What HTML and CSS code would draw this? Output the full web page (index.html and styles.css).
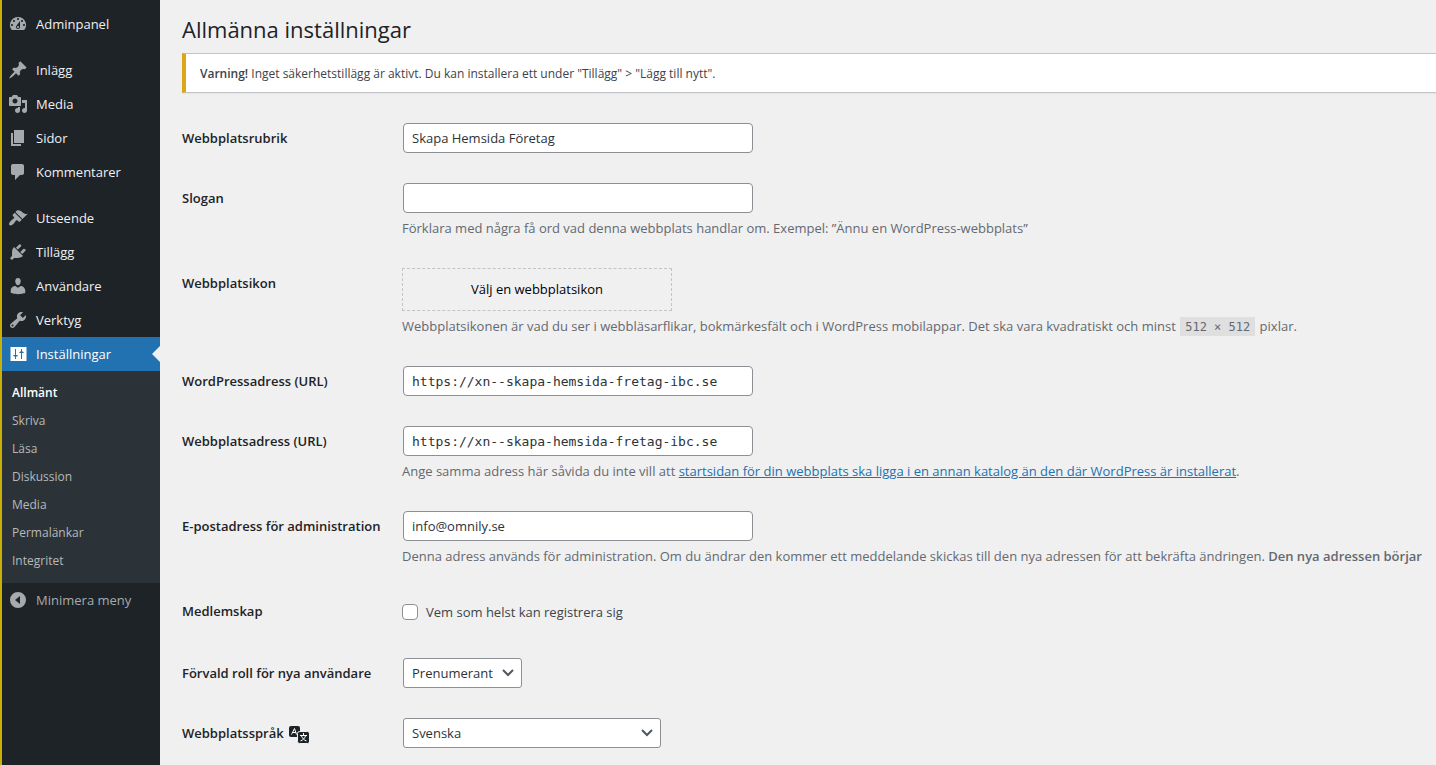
FILE: index.html
```html
<!DOCTYPE html>
<html lang="sv">
<head>
<meta charset="utf-8">
<meta name="viewport" content="width=device-width, initial-scale=1">
<title>Allmänna inställningar</title>
<link rel="stylesheet" href="styles.css">
</head>
<body>
<div class="layout">
  <nav class="sidebar" aria-label="Huvudmeny">
    <ul class="menu">
      <li><a class="menu-link" href="#"><svg class="icon" viewBox="0 0 20 20"><path fill-rule="evenodd" d="M3.76 16h12.48A7.998 7.998 0 0010 3a7.998 7.998 0 00-6.24 13zM10 4c.55 0 1 .45 1 1s-.45 1-1 1-1-.45-1-1 .45-1 1-1zM6 6c.55 0 1 .45 1 1s-.45 1-1 1-1-.45-1-1 .45-1 1-1zm8 0c.55 0 1 .45 1 1s-.45 1-1 1-1-.45-1-1 .45-1 1-1zm-5.37 5.55L12 7v6c0 1.1-.9 2-2 2s-2-.9-2-2c0-.57.24-1.08.63-1.45zM4 10c.55 0 1 .45 1 1s-.45 1-1 1-1-.45-1-1 .45-1 1-1zm12 0c.55 0 1 .45 1 1s-.45 1-1 1-1-.45-1-1 .45-1 1-1zm-5 3c0-.55-.45-1-1-1s-1 .45-1 1 .45 1 1 1 1-.45 1-1z"/></svg>Adminpanel</a></li>
      <li class="group"><a class="menu-link" href="#"><svg class="icon" viewBox="0 0 20 20"><path d="M10.44 3.02l1.82-1.82 6.36 6.35-1.83 1.82c-1.05-.68-2.48-.57-3.41.36l-.75.75c-.92.93-1.04 2.35-.35 3.41l-1.83 1.82-2.41-2.41-2.8 2.79c-.42.42-3.38 2.71-3.8 2.29s1.86-3.39 2.28-3.81l2.79-2.79L4.1 9.36l1.83-1.82c1.05.69 2.48.57 3.4-.36l.75-.75c.93-.92 1.05-2.35.36-3.41z"/></svg>Inlägg</a></li>
      <li><a class="menu-link" href="#"><svg class="icon" viewBox="0 0 20 20"><path fill-rule="evenodd" d="M13 11V4c0-.55-.45-1-1-1h-1.67L9 1H5L3.67 3H2c-.55 0-1 .45-1 1v7c0 .55.45 1 1 1h10c.55 0 1-.45 1-1zM7 4.5c1.38 0 2.5 1.12 2.5 2.5S8.38 9.5 7 9.5 4.5 8.38 4.5 7 5.62 4.5 7 4.5zM14 6h5v10.5c0 1.38-1.12 2.5-2.5 2.5S14 17.88 14 16.5s1.12-2.5 2.5-2.5c.17 0 .34.02.5.05V9h-3V6zm-4 8.05V13h2v3.5c0 1.38-1.12 2.5-2.5 2.5S7 17.88 7 16.5 8.12 14 9.5 14c.17 0 .34.02.5.05z"/></svg>Media</a></li>
      <li><a class="menu-link" href="#"><svg class="icon" viewBox="0 0 20 20"><path d="M6 15V2h10v13H6zm-1 1h8v2H3V5h2v11z"/></svg>Sidor</a></li>
      <li><a class="menu-link" href="#"><svg class="icon" viewBox="0 0 20 20"><path d="M5 2h9c1.1 0 2 .9 2 2v7c0 1.1-.9 2-2 2h-2l-5 5v-5H5c-1.1 0-2-.9-2-2V4c0-1.1.9-2 2-2z"/></svg>Kommentarer</a></li>
      <li class="group"><a class="menu-link" href="#"><svg class="icon" viewBox="0 0 20 20"><path d="M14.48 11.06L7.41 3.99l1.5-1.5c.5-.56 2.3-.47 3.51.32 1.21.8 1.43 1.28 2.91 2.1 1.18.64 2.45 1.26 4.45.85zm-.71.71L6.7 4.7 4.93 6.47c-.39.39-.39 1.02 0 1.41l1.06 1.06c.39.39.39 1.03 0 1.42-.6.6-1.43 1.11-2.21 1.69-.35.26-.7.53-1.01.84C1.43 14.23.4 16.08 1.4 17.07c.99 1 2.84-.03 4.18-1.36.31-.31.58-.66.85-1.02.57-.78 1.08-1.61 1.69-2.21.39-.39 1.02-.39 1.41 0l1.06 1.06c.39.39 1.02.39 1.41 0z"/></svg>Utseende</a></li>
      <li><a class="menu-link" href="#"><svg class="icon" viewBox="0 0 20 20"><path d="M13.11 4.36L9.87 7.6 8 5.73l3.24-3.24c.35-.34 1.05-.2 1.56.32.52.51.66 1.21.31 1.55zm-8 1.77l.91-1.12 9.01 9.01-1.19.84c-.71.71-2.63 1.16-3.82 1.16H6.14L4.9 17.26c-.59.59-1.54.59-2.12 0-.59-.58-.59-1.53 0-2.12l1.24-1.24v-3.88c0-1.13.4-3.19 1.09-3.89zm7.26 3.97l3.24-3.24c.34-.35 1.04-.21 1.55.31.52.51.66 1.21.31 1.55l-3.24 3.25z"/></svg>Tillägg</a></li>
      <li><a class="menu-link" href="#"><svg class="icon" viewBox="0 0 20 20"><path d="M10 9.25c-2.27 0-2.73-3.44-2.73-3.44C7 4.02 7.82 2 9.97 2c2.16 0 2.98 2.02 2.71 3.81 0 0-.41 3.44-2.68 3.44zm0 2.57L12.72 10c2.39 0 4.52 2.33 4.52 4.53v2.49s-3.65 1.13-7.24 1.13c-3.65 0-7.24-1.13-7.24-1.13v-2.49c0-2.25 1.94-4.48 4.47-4.48z"/></svg>Användare</a></li>
      <li><a class="menu-link" href="#"><svg class="icon" viewBox="0 0 20 20"><path fill-rule="evenodd" d="M16.68 9.77c-1.34 1.34-3.3 1.67-4.95.99l-5.41 6.52c-.99.99-2.59.99-3.58 0s-.99-2.59 0-3.57l6.52-5.42c-.68-1.65-.35-3.61.99-4.95 1.28-1.28 3.12-1.62 4.72-1.06l-2.89 2.89 2.82 2.82 2.86-2.87c.53 1.58.18 3.39-1.08 4.65zM3.81 16.21c.4.39 1.04.39 1.43 0 .4-.4.4-1.04 0-1.43-.39-.4-1.03-.4-1.43 0-.39.39-.39 1.03 0 1.43z"/></svg>Verktyg</a></li>
      <li><a class="menu-link current" href="#" aria-current="true"><svg class="icon" viewBox="0 0 20 20"><path fill-rule="evenodd" d="M18.500 17V3h-16v14zM7 11V5h1v6h2l-1 1.500H8V15H7v-2.500H6L5 11zM13 15V9h-2l1-1.500h1V5h1v2.500h1L16 9h-2v6z"/></svg>Inställningar</a>
        <ul class="submenu">
          <li><a class="sub-link active" href="#" aria-current="page">Allmänt</a></li>
          <li><a class="sub-link" href="#">Skriva</a></li>
          <li><a class="sub-link" href="#">Läsa</a></li>
          <li><a class="sub-link" href="#">Diskussion</a></li>
          <li><a class="sub-link" href="#">Media</a></li>
          <li><a class="sub-link" href="#">Permalänkar</a></li>
          <li><a class="sub-link" href="#">Integritet</a></li>
        </ul>
      </li>
    </ul>
    <button class="collapse" type="button"><svg class="icon" viewBox="0 0 20 20"><path fill-rule="evenodd" d="M10 2a8 8 0 110 16 8 8 0 010-16zm2 12V6l-5 4z"/></svg>Minimera meny</button>
  </nav>

  <main class="content">
    <h1 class="title">Allmänna inställningar</h1>
    <div class="notice"><p class="notice-text"><strong>Varning!</strong> Inget säkerhetstillägg är aktivt. Du kan installera ett under "Tillägg" &gt; "Lägg till nytt".</p></div>

    <form class="settings">
      <div class="row">
        <label class="label" for="blogname">Webbplatsrubrik</label>
        <div class="field"><input class="text" id="blogname" type="text" value="Skapa Hemsida Företag"></div>
      </div>
      <div class="row">
        <label class="label" for="tagline">Slogan</label>
        <div class="field"><input class="text" id="tagline" type="text" aria-describedby="tagline-help">
          <p class="help" id="tagline-help">Förklara med några få ord vad denna webbplats handlar om. Exempel: ”Ännu en WordPress-webbplats”</p></div>
      </div>
      <div class="row">
        <label class="label" for="site-icon">Webbplatsikon</label>
        <div class="field"><button class="upload" id="site-icon" type="button">Välj en webbplatsikon</button>
          <p class="help">Webbplatsikonen är vad du ser i webbläsarflikar, bokmärkesfält och i WordPress mobilappar. Det ska vara kvadratiskt och minst <code class="code">512 × 512</code> pixlar.</p></div>
      </div>
      <div class="row">
        <label class="label" for="siteurl">WordPressadress (URL)</label>
        <div class="field"><input class="text mono" id="siteurl" type="url" value="https://xn--skapa-hemsida-fretag-ibc.se"></div>
      </div>
      <div class="row">
        <label class="label" for="home">Webbplatsadress (URL)</label>
        <div class="field"><input class="text mono" id="home" type="url" value="https://xn--skapa-hemsida-fretag-ibc.se">
          <p class="help">Ange samma adress här såvida du inte vill att <a class="link" href="#">startsidan för din webbplats ska ligga i en annan katalog än den där WordPress är installerat</a>.</p></div>
      </div>
      <div class="row">
        <label class="label" for="email">E-postadress för administration</label>
        <div class="field"><input class="text" id="email" type="email" value="info@omnily.se">
          <p class="help">Denna adress används för administration. Om du ändrar den kommer ett meddelande skickas till den nya adressen för att bekräfta ändringen. <strong>Den nya adressen börjar</strong></p></div>
      </div>
      <div class="row">
        <span class="label">Medlemskap</span>
        <div class="field"><label class="choice" for="register"><input class="check" id="register" type="checkbox">Vem som helst kan registrera sig</label></div>
      </div>
      <div class="row">
        <label class="label" for="role">Förvald roll för nya användare</label>
        <div class="field"><div class="select-wrap role"><select class="select" id="role"><option>Prenumerant</option></select><svg class="chevron" viewBox="0 0 16 16"><path d="M3 5l5 5 5-5"/></svg></div></div>
      </div>
      <div class="row">
        <label class="label" for="lang">Webbplatsspråk
          <svg class="translate" viewBox="0 0 20 20" aria-hidden="true"><rect x="0" y="1" width="11" height="11" rx="2"/><path class="stroke" d="M2.500 9.500l3-6 2 6M4 7.500h3"/><rect class="front" x="8.500" y="6.500" width="12" height="12" rx="2"/><path class="stroke" d="M14.500 8v2M11 10.500h7M12.500 11c1 2.500 2.500 4 5 5M16.500 11c-1 2.500-2.500 4-5 5"/></svg></label>
        <div class="field"><div class="select-wrap lang"><select class="select" id="lang"><option>Svenska</option></select><svg class="chevron" viewBox="0 0 16 16"><path d="M3 5l5 5 5-5"/></svg></div></div>
      </div>
    </form>
  </main>
</div>
</body>
</html>
```
FILE: styles.css
```css
* {
  box-sizing: border-box;
}

body {
  margin: 0;
  background: #f0f0f0;
  color: #3c434a;
  font-family: "Open Sans", "Noto Sans", sans-serif;
  font-size: 13px;
  line-height: 20px;
}

ul {
  margin: 0;
  padding: 0;
  list-style: none;
}

.layout {
  display: flex;
  min-height: 100vh;
}

/* Sidebar */
.sidebar {
  flex: 0 0 160px;
  padding-top: 7px;
  border-left: 2px solid #c9b009;
  background: #1d2327;
}

.group {
  margin-top: 12px;
}

.menu-link,
.collapse {
  display: flex;
  align-items: center;
  gap: 8px;
  width: 100%;
  height: 34px;
  padding: 0 6px;
  color: #f0f0f1;
  font: inherit;
  text-decoration: none;
}

.icon {
  flex: none;
  width: 20px;
  height: 20px;
  fill: #a7aaad;
}

.current {
  position: relative;
  background: #2271b1;
  color: #fff;
}

.current .icon {
  fill: #fff;
}

.current::after {
  content: "";
  position: absolute;
  top: 9px;
  right: 0;
  border: 8px solid transparent;
  border-left-width: 0;
  border-right-color: #f0f0f0;
}

.submenu {
  padding: 8px 0;
  background: #2c3338;
}

.sub-link {
  display: block;
  padding: 4px 10px;
  color: #b5b9bd;
  font-size: 12px;
  text-decoration: none;
}

.active {
  color: #fff;
  font-weight: 600;
}

.collapse {
  border: 0;
  background: none;
  color: #a7aaad;
}

/* Content */
.content {
  flex: 1;
  min-width: 0;
  padding: 15px 0 15px 22px;
  overflow: hidden;
}

.title {
  margin: 0 0 10px;
  color: #1d2327;
  font-size: 22px;
  font-weight: 400;
  line-height: 28px;
}

.notice {
  margin-bottom: 15px;
  padding: 10px 14px 8px;
  border: 1px solid #c3c4c7;
  border-left: 4px solid #dba617;
  border-right: 0;
  background: #fff;
  box-shadow: 0 1px 1px rgba(0, 0, 0, 0.04);
}

.notice-text {
  margin: 0;
  font-size: 12px;
}

strong {
  font-weight: 600;
}

.row {
  display: grid;
  grid-template-columns: 220px minmax(0, 1fr);
  white-space: nowrap;
}

.label {
  padding: 20px 0;
  color: #1d2327;
  font-weight: 600;
}

.field {
  padding: 15px 0;
}

.text {
  display: block;
  width: 350px;
  height: 30px;
  margin: 0 1px;
  padding: 0 8px;
  border: 1px solid #8c8f94;
  border-radius: 4px;
  background: #fff;
  color: #2c3338;
  font: inherit;
}

.mono {
  font-family: "DejaVu Sans Mono", monospace;
}

.help {
  margin: 5px 0 0;
  color: #646970;
  line-height: 20px;
}

.upload {
  display: block;
  width: 270px;
  height: 43px;
  padding: 0 0 1px;
  border: 1px dashed #c3c4c7;
  background: none;
  color: #000;
  font: inherit;
}

.code {
  margin: 0 1px;
  padding: 3px 5px 2px;
  background: #dfdfe0;
  font-family: "DejaVu Sans Mono", monospace;
  font-size: 12px;
  line-height: 16px;
}

.link {
  color: #2271b1;
}

.choice {
  display: flex;
  align-items: center;
  gap: 8px;
  height: 32px;
}

.check {
  width: 16px;
  height: 16px;
  margin: 0;
  border: 1px solid #8c8f94;
  border-radius: 4px;
  background: #fff;
  appearance: none;
}

.check:checked {
  background: #2271b1;
}

.select-wrap {
  display: grid;
  align-items: center;
  margin-left: 1px;
}

.role {
  width: 119px;
}

.lang {
  width: 258px;
}

.select {
  grid-area: 1 / 1;
  width: 100%;
  height: 30px;
  padding: 0 24px 0 8px;
  border: 1px solid #8c8f94;
  border-radius: 3px;
  background: #fff;
  color: #2c3338;
  font: inherit;
  appearance: none;
}

.chevron {
  grid-area: 1 / 1;
  justify-self: end;
  width: 16px;
  height: 16px;
  margin-right: 6px;
  fill: none;
  stroke: #50575e;
  stroke-width: 2;
  pointer-events: none;
}

.translate {
  width: 20px;
  height: 20px;
  margin-left: 2px;
  vertical-align: middle;
  fill: #1d2327;
}

.translate .stroke {
  fill: none;
  stroke: #fff;
}

.translate .front {
  stroke: #f0f0f0;
}
```
